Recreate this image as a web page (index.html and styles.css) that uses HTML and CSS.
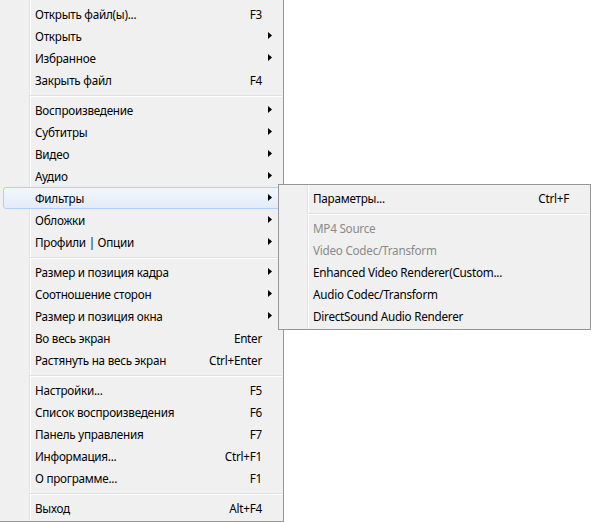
FILE: index.html
```html
<!DOCTYPE html>
<html lang="ru">
<head>
<meta charset="utf-8">
<title>Меню</title>
<link rel="stylesheet" href="styles.css">
</head>
<body>
<div class="menu main">
  <div class="item"><span class="label">Открыть файл(ы)...</span><span class="key">F3</span><span class="arrow"></span></div>
  <div class="item"><span class="label">Открыть</span><span class="key"></span><span class="arrow sub-arrow"></span></div>
  <div class="item"><span class="label">Избранное</span><span class="key"></span><span class="arrow sub-arrow"></span></div>
  <div class="item"><span class="label">Закрыть файл</span><span class="key">F4</span><span class="arrow"></span></div>
  <div class="sep"></div>
  <div class="item"><span class="label">Воспроизведение</span><span class="key"></span><span class="arrow sub-arrow"></span></div>
  <div class="item"><span class="label">Субтитры</span><span class="key"></span><span class="arrow sub-arrow"></span></div>
  <div class="item"><span class="label">Видео</span><span class="key"></span><span class="arrow sub-arrow"></span></div>
  <div class="item"><span class="label">Аудио</span><span class="key"></span><span class="arrow sub-arrow"></span></div>
  <div class="item active"><span class="label">Фильтры</span><span class="key"></span><span class="arrow sub-arrow"></span></div>
  <div class="item"><span class="label">Обложки</span><span class="key"></span><span class="arrow sub-arrow"></span></div>
  <div class="item"><span class="label">Профили | Опции</span><span class="key"></span><span class="arrow sub-arrow"></span></div>
  <div class="sep"></div>
  <div class="item"><span class="label">Размер и позиция кадра</span><span class="key"></span><span class="arrow sub-arrow"></span></div>
  <div class="item"><span class="label">Соотношение сторон</span><span class="key"></span><span class="arrow sub-arrow"></span></div>
  <div class="item"><span class="label">Размер и позиция окна</span><span class="key"></span><span class="arrow sub-arrow"></span></div>
  <div class="item"><span class="label">Во весь экран</span><span class="key">Enter</span><span class="arrow"></span></div>
  <div class="item"><span class="label">Растянуть на весь экран</span><span class="key">Ctrl+Enter</span><span class="arrow"></span></div>
  <div class="sep"></div>
  <div class="item"><span class="label">Настройки...</span><span class="key">F5</span><span class="arrow"></span></div>
  <div class="item"><span class="label">Список воспроизведения</span><span class="key">F6</span><span class="arrow"></span></div>
  <div class="item"><span class="label">Панель управления</span><span class="key">F7</span><span class="arrow"></span></div>
  <div class="item"><span class="label">Информация...</span><span class="key">Ctrl+F1</span><span class="arrow"></span></div>
  <div class="item"><span class="label">О программе...</span><span class="key">F1</span><span class="arrow"></span></div>
  <div class="sep"></div>
  <div class="item"><span class="label">Выход</span><span class="key">Alt+F4</span><span class="arrow"></span></div>
</div>

<div class="menu submenu">
  <div class="item"><span class="label">Параметры...</span><span class="key">Ctrl+F</span><span class="arrow"></span></div>
  <div class="sep"></div>
  <div class="item disabled"><span class="label">MP4 Source</span><span class="key"></span><span class="arrow"></span></div>
  <div class="item disabled"><span class="label">Video Codec/Transform</span><span class="key"></span><span class="arrow"></span></div>
  <div class="item"><span class="label">Enhanced Video Renderer(Custom...</span><span class="key"></span><span class="arrow"></span></div>
  <div class="item"><span class="label">Audio Codec/Transform</span><span class="key"></span><span class="arrow"></span></div>
  <div class="item"><span class="label">DirectSound Audio Renderer</span><span class="key"></span><span class="arrow"></span></div>
</div>
</body>
</html>
```

FILE: styles.css
```css
html, body {
  margin: 0;
  padding: 0;
  background: #ffffff;
}

body {
  position: relative;
  width: 591px;
  height: 522px;
  overflow: hidden;
  font-family: "Noto Sans", "Open Sans", sans-serif;
  font-size: 11.7px;
  letter-spacing: -0.25px;
  color: #000000;
}

.menu {
  box-sizing: border-box;
  display: flex;
  flex-direction: column;
  border: 1px solid #979797;
  background-color: #f0f0f0;
}

.main {
  width: 285px;
  height: 523px;
  margin: -1px 0 0 -1px;
  padding: 3px 2px 2px 3px;
  background-image: linear-gradient(to right,
    transparent 29px, #e2e3e3 29px, #e2e3e3 30px,
    #ffffff 30px, #ffffff 31px, transparent 31px);
}

.submenu {
  position: absolute;
  left: 278px;
  top: 184px;
  width: 313px;
  height: 146px;
  padding: 2px;
  background-image: linear-gradient(to right,
    transparent 28px, #e2e3e3 28px, #e2e3e3 29px,
    #ffffff 29px, #ffffff 30px, transparent 30px);
}

.item {
  box-sizing: border-box;
  display: flex;
  align-items: center;
  height: 22px;
  padding: 0 9px 0 32px;
  border: 1px solid transparent;
  border-radius: 3px;
  white-space: nowrap;
}

.item .label {
  flex: 1;
  margin-left: -1px;
}

.item .key {
  text-align: right;
}

.item .arrow {
  width: 4px;
  height: 7px;
  margin-left: 6px;
  margin-right: -1px;
}

.item .sub-arrow {
  background: #000000;
  clip-path: polygon(0 0, 100% 50%, 0 100%);
  margin-top: -1px;
}

.item.active {
  border-color: #aecff7;
  background: linear-gradient(to bottom, #f2f7fd, #e2ebf8);
}

.item.disabled {
  color: #8a8a8a;
}

.sep {
  height: 8px;
  margin-left: 27px;
  margin-right: -1px;
  background: linear-gradient(to bottom,
    transparent 4px, #e0e0e0 4px, #e0e0e0 5px,
    #ffffff 5px, #ffffff 6px, transparent 6px);
}

.submenu .sep {
  margin-left: 26px;
  margin-right: 0;
}
```
